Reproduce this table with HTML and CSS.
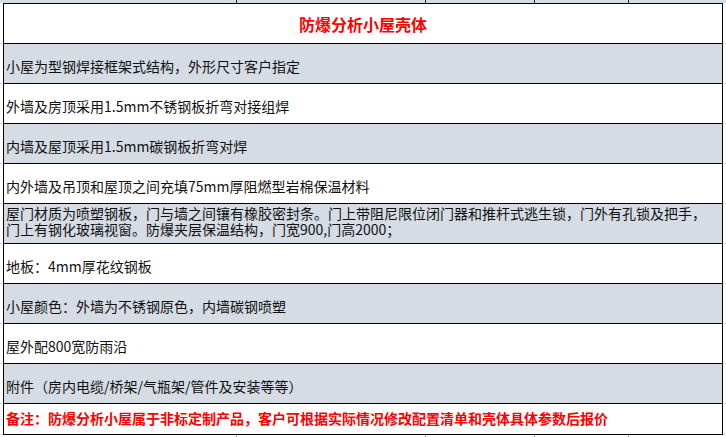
FILE: index.html
```html
<!DOCTYPE html>
<html lang="zh">
<head>
<meta charset="utf-8">
<title>防爆分析小屋壳体</title>
<link rel="stylesheet" href="styles.css">
</head>
<body>
<div class="sheet">
  <div class="strip strip-top">
    <span></span><span></span><span></span><span></span><span class="last"></span>
  </div>

  <div class="row">
    <div class="gut"></div>
    <div class="cell title">防爆分析小屋壳体</div>
    <div class="gut"></div>
  </div>

  <div class="row">
    <div class="gut"></div>
    <div class="cell shade">小屋为型钢焊接框架式结构，外形尺寸客户指定</div>
    <div class="gut"></div>
  </div>

  <div class="row">
    <div class="gut"></div>
    <div class="cell">外墙及房顶采用1.5mm不锈钢板折弯对接组焊</div>
    <div class="gut"></div>
  </div>

  <div class="row">
    <div class="gut"></div>
    <div class="cell shade">内墙及屋顶采用1.5mm碳钢板折弯对焊</div>
    <div class="gut"></div>
  </div>

  <div class="row">
    <div class="gut"></div>
    <div class="cell">内外墙及吊顶和屋顶之间充填75mm厚阻燃型岩棉保温材料</div>
    <div class="gut"></div>
  </div>

  <div class="row">
    <div class="gut"></div>
    <div class="cell shade multi">屋门材质为喷塑钢板，门与墙之间镶有橡胶密封条。门上带阻尼限位闭门器和推杆式逃生锁，门外有孔锁及把手，门上有钢化玻璃视窗。防爆夹层保温结构，门宽900,门高2000；</div>
    <div class="gut"></div>
  </div>

  <div class="row">
    <div class="gut"></div>
    <div class="cell">地板：4mm厚花纹钢板</div>
    <div class="gut"></div>
  </div>

  <div class="row">
    <div class="gut"></div>
    <div class="cell shade">小屋颜色：外墙为不锈钢原色，内墙碳钢喷塑</div>
    <div class="gut"></div>
  </div>

  <div class="row">
    <div class="gut"></div>
    <div class="cell">屋外配800宽防雨沿</div>
    <div class="gut"></div>
  </div>

  <div class="row">
    <div class="gut"></div>
    <div class="cell shade">附件（房内电缆/桥架/气瓶架/管件及安装等等）</div>
    <div class="gut"></div>
  </div>

  <div class="row">
    <div class="gut"></div>
    <div class="cell note">备注：防爆分析小屋属于非标定制产品，客户可根据实际情况修改配置清单和壳体具体参数后报价</div>
    <div class="gut"></div>
  </div>

  <div class="strip strip-bottom">
    <span></span><span></span><span></span><span></span><span class="last"></span>
  </div>
</div>
</body>
</html>
```

FILE: styles.css
```css
* {
  box-sizing: border-box;
}

html, body {
  margin: 0;
  padding: 0;
  background: #ffffff;
}

body {
  font-family: "Noto Sans CJK SC", "Noto Sans", sans-serif;
  font-size: 14px;
  color: #111111;
  width: 726px;
  height: 437px;
  overflow: hidden;
}

.sheet {
  width: 726px;
}

.strip {
  display: grid;
  grid-template-columns: 237px 189px 109px 94px 1fr;
}

.strip span {
  border-right: 1px solid #222222;
}

.strip span.last {
  border-right: none;
}

.strip-top {
  height: 3px;
  background: #d6dce4;
}

.strip-bottom {
  height: 3px;
  background: #ffffff;
}

.strip-bottom span {
  border-right-color: #9a9a9a;
}

.row {
  display: grid;
  grid-template-columns: 3px 720px 3px;
}

.gut {
  border-bottom: 1px solid #d4d4d4;
}

.cell {
  height: 40px;
  border-left: 1px solid #000000;
  border-right: 1px solid #000000;
  border-bottom: 1px solid #000000;
  padding: 12px 0 0 2px;
  line-height: 20px;
  white-space: nowrap;
  background: #ffffff;
}

.cell.shade {
  background: #d6dce4;
}

.cell.title {
  height: 41px;
  border-top: 1px solid #000000;
  padding: 0;
  display: flex;
  align-items: center;
  justify-content: center;
  color: #ff0000;
  font-weight: bold;
  font-size: 16px;
}

.cell.multi {
  white-space: normal;
  padding: 1px 4px 0 2px;
  line-height: 16px;
}

.cell.note {
  height: 31px;
  padding: 4px 0 0 2px;
  line-height: 20px;
  color: #ff0000;
  font-weight: bold;
}
```
